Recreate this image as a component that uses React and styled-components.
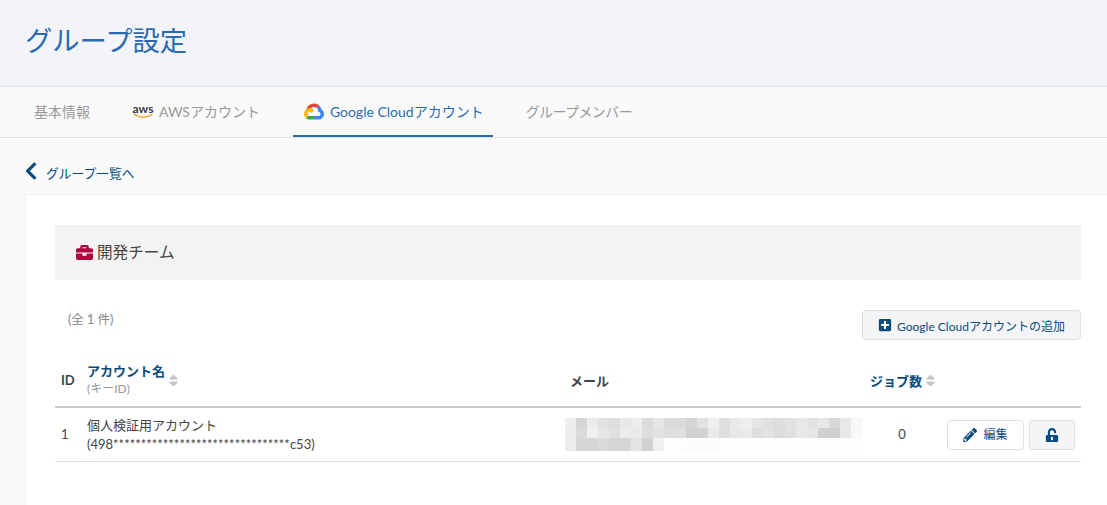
import React from 'react';
import styled, { createGlobalStyle } from 'styled-components';
import { FaBriefcase, FaChevronLeft, FaPlusSquare, FaPencilAlt, FaUnlockAlt, FaSort } from 'react-icons/fa';

const GlobalStyle = createGlobalStyle`
  html, body {
    margin: 0;
    padding: 0;
    background: #fafafa;
    overflow: hidden;
    font-family: Lato, "Noto Sans CJK JP", sans-serif;
    color: #444;
  }
  * { box-sizing: border-box; }
`;

const Page = styled.div`
  width: 1107px;
  height: 505px;
  overflow: hidden;
`;

const Header = styled.header`
  height: 87px;
  background: #f2f4f9;
  border-bottom: 1px solid #dde3ee;
  padding: 22px 25px 0;
`;

const Title = styled.h1`
  margin: 0;
  font-size: 27.3px;
  line-height: 38px;
  font-weight: 400;
  color: #2a6ab3;
`;

const Tabs = styled.nav`
  height: 51px;
  display: flex;
  padding-left: 15px;
  border-bottom: 1px solid #e2e4e8;
`;

const Tab = styled.a`
  height: 50px;
  padding: 0 ${props => props.$right || 19}px 0 ${props => props.$left || 19}px;
  display: flex;
  align-items: center;
  gap: 6px;
  font-size: 14px;
  letter-spacing: ${props => props.$tight ? '-0.6px' : 'normal'};
  color: ${props => props.$active ? '#2a6ab3' : '#999'};
  border-bottom: 2px solid ${props => props.$active ? '#2a6ab3' : 'transparent'};
  margin-right: ${props => props.$gap || 0}px;
`;

const BackLink = styled.a`
  height: 56px;
  display: flex;
  align-items: center;
  gap: 5px;
  padding: 12px 0 0 21px;
  font-size: 12.75px;
  color: #0a4b7d;
  svg { font-size: 20px; margin-top: -3px; }
`;

const Card = styled.main`
  margin-left: 25px;
  height: 320px;
  padding: 30px 26px 0 29px;
  background: #fff;
  border-top: 1px solid #f0f0f0;
  border-left: 1px solid #f0f0f0;
`;

const PanelTitle = styled.div`
  height: 55px;
  display: flex;
  align-items: center;
  gap: 4px;
  padding: 0 0 3px 21px;
  background: #f3f3f3;
  font-size: 15.6px;
  color: #444;
  svg { color: #b0063f; font-size: 17px; margin-top: 2px; }
`;

const Toolbar = styled.div`
  display: flex;
  justify-content: space-between;
  align-items: flex-start;
  padding: 30px 0 0 13px;
  height: 78px;
`;

const Count = styled.span`
  margin-top: 1px;
  font-size: 12.5px;
  line-height: 18px;
  color: #888;
`;

const AddButton = styled.button`
  width: 219px;
  height: 30px;
  display: flex;
  align-items: center;
  justify-content: center;
  gap: 5px;
  padding: 0;
  background: #f4f5f6;
  border: 1px solid #dcdfe3;
  border-radius: 4px;
  font: inherit;
  font-size: 12px;
  color: #0a4b7d;
  svg { font-size: 14px; }
`;

const Table = styled.div`
  display: grid;
  grid-template-columns: 32px 483px 300px 211px;
`;

const HeadCell = styled.div`
  height: 50px;
  display: flex;
  align-items: center;
  padding: 0 ${props => props.$pad || 0}px 4px;
  border-bottom: 2px solid #cbcbcb;
  font-size: 13px;
  font-weight: 700;
  color: ${props => props.$link ? '#0a4b7d' : '#444'};
`;

const HeadStack = styled.div`
  display: flex;
  flex-direction: column;
  line-height: 18px;
`;

const SubLabel = styled.span`
  font-size: 12px;
  font-weight: 400;
  color: #999;
`;

const SortIcon = styled(FaSort)`
  color: #c4c4c4;
  font-size: 15px;
  margin-left: 1px;
`;

const Cell = styled.div`
  height: 54px;
  display: flex;
  align-items: center;
  padding: 0 ${props => props.$pad || 0}px;
  border-bottom: 1px solid #dcdcdc;
  font-size: 13px;
  line-height: 19px;
  color: #444;
`;

const Blur = styled.div`
  display: grid;
  grid-template-columns: repeat(27, 11px);
  grid-template-rows: 10px 10px 13px;
  margin-left: -5px;
`;

const JobCell = styled.div`
  width: 64px;
  text-align: center;
`;

const Actions = styled.div`
  display: flex;
  align-items: center;
  gap: 5px;
  margin-left: auto;
  padding-right: 6px;
`;

const RowButton = styled.button`
  height: 30px;
  width: ${props => props.$width}px;
  display: flex;
  align-items: center;
  justify-content: center;
  gap: 6px;
  padding: 0;
  background: ${props => props.$grey ? '#f4f5f6' : '#fff'};
  border: 1px solid #dcdfe3;
  border-radius: 4px;
  font: inherit;
  font-size: 12px;
  color: #0a4b7d;
  svg { font-size: 14px; }
`;

const AwsMark = styled.span`
  display: flex;
  flex-direction: column;
  align-items: center;
  width: 20px;
  svg { display: block; margin-top: -2px; }
`;

const AwsText = styled.span`
  font-size: 12px;
  line-height: 12px;
  font-weight: 700;
  color: #3a3a3a;
`;

const blurRows = [
  [238, 213, 235, 225, 222, 232, 236, 219, 230, 218, 219, 212, 226, 238, 222, 233, 238, 230, 224, 220, 226, 232, 226, 232, 216, 232, 248],
  [238, 218, 240, 230, 224, 236, 234, 222, 226, 222, 224, 210, 210, 233, 222, 232, 234, 222, 226, 220, 224, 232, 230, 208, 208, 232, 248],
  [236, 214, 214, 218, 214, 214, 228, 210, 240, 253, 253, 252, 252, 252, 253, 253, 253, 253, 253, 253, 253, 253, 253, 253, 253, 253, 253],
];

const AwsLogo = () => (
  <AwsMark>
    <AwsText>aws</AwsText>
    <svg width="21" height="6" viewBox="0 0 21 6">
      <path d="M1 1c5 4 13 4 18 .5" fill="none" stroke="#f39a1f" strokeWidth="1.3" strokeLinecap="round" />
    </svg>
  </AwsMark>
);

const GoogleCloudLogo = () => (
  <svg width="20" height="17" viewBox="0 0 256 206">
    <path fill="#EA4335" d="m170.252 56.819l22.253-22.253l1.483-9.37C153.437-11.677 88.976-7.496 52.42 33.92C42.267 45.423 34.734 59.764 30.717 74.573l7.97-1.123l44.505-7.34l3.436-3.513c19.797-21.742 53.27-24.667 76.128-6.168z" />
    <path fill="#4285F4" d="M224.205 73.918a100.249 100.249 0 0 0-30.217-48.722l-31.232 31.232a55.515 55.515 0 0 1 20.379 44.037v5.544c15.35 0 27.797 12.445 27.797 27.796c0 15.352-12.446 27.485-27.797 27.485h-55.671l-5.466 5.934v33.34l5.466 5.231h55.671c39.93.311 72.553-31.494 72.864-71.424a72.303 72.303 0 0 0-31.494-60.453" />
    <path fill="#34A853" d="M71.87 205.796h55.593V161.29H71.87a27.275 27.275 0 0 1-11.399-2.498l-7.887 2.42l-22.409 22.253l-1.952 7.574c12.567 9.489 27.9 14.825 43.647 14.757" />
    <path fill="#FBBC05" d="M71.87 61.425C31.94 61.664-.237 94.228.001 134.159a72.301 72.301 0 0 0 28.222 56.88l32.248-32.246c-13.99-6.322-20.208-22.786-13.887-36.776c6.32-13.99 22.786-20.208 36.775-13.888a27.796 27.796 0 0 1 13.887 13.888l32.248-32.248A72.224 72.224 0 0 0 71.87 61.425" />
  </svg>
);

export default function App() {
  return (
    <Page>
      <GlobalStyle />
      <Header>
        <Title>グループ設定</Title>
      </Header>
      <Tabs>
        <Tab>基本情報</Tab>
        <Tab $left={24} $gap={14}><AwsLogo />AWSアカウント</Tab>
        <Tab $active $left={11} $right={9} $gap={23}><GoogleCloudLogo />Google Cloudアカウント</Tab>
        <Tab $left={10} $tight>グループメンバー</Tab>
      </Tabs>
      <BackLink><FaChevronLeft />グループ一覧へ</BackLink>
      <Card>
        <PanelTitle><FaBriefcase />開発チーム</PanelTitle>
        <Toolbar>
          <Count>(全 1 件)</Count>
          <AddButton><FaPlusSquare />Google Cloudアカウントの追加</AddButton>
        </Toolbar>
        <Table>
          <HeadCell $pad={6}>ID</HeadCell>
          <HeadCell $link>
            <HeadStack>
              アカウント名
              <SubLabel>(キーID)</SubLabel>
            </HeadStack>
            <SortIcon />
          </HeadCell>
          <HeadCell>メール</HeadCell>
          <HeadCell $link>ジョブ数<SortIcon /></HeadCell>
          <Cell $pad={6}>1</Cell>
          <Cell>
            <div>
              個人検証用アカウント<br />
              (498********************************c53)
            </div>
          </Cell>
          <Cell>
            <Blur>
              {blurRows.flat().map((v, i) => (
                <div key={i} style={{ background: `rgb(${v},${v},${v})` }} />
              ))}
            </Blur>
          </Cell>
          <Cell>
            <JobCell>0</JobCell>
            <Actions>
              <RowButton $width={77}><FaPencilAlt />編集</RowButton>
              <RowButton $width={46} $grey><FaUnlockAlt /></RowButton>
            </Actions>
          </Cell>
        </Table>
      </Card>
    </Page>
  );
}
